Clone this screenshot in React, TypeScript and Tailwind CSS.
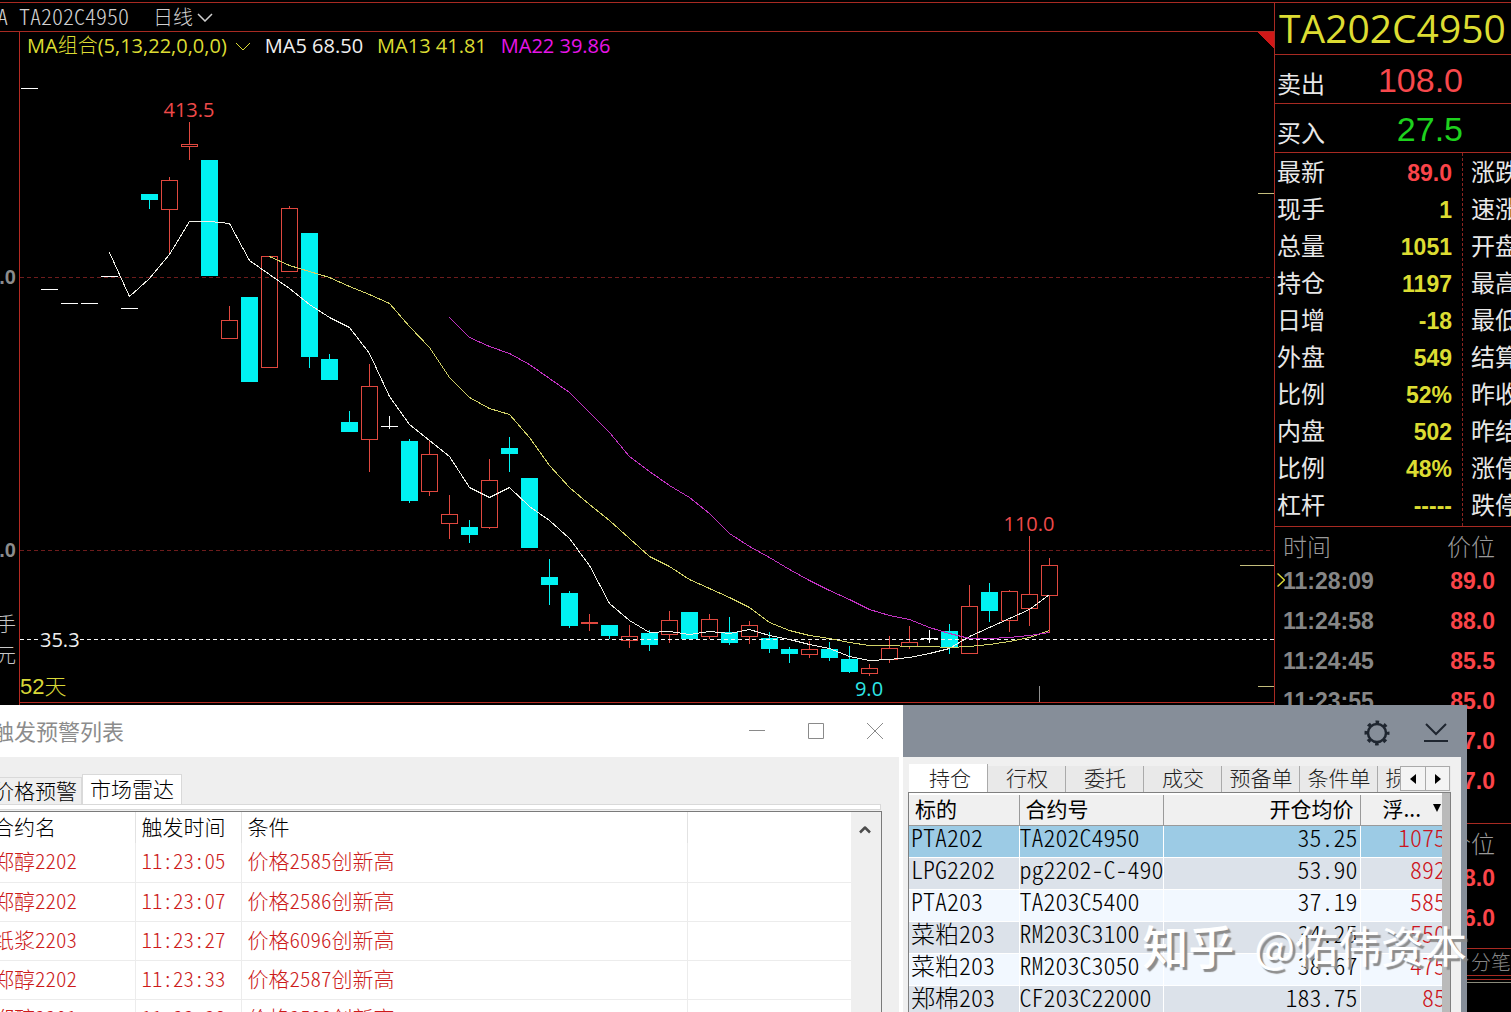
import { useState } from "react";
import { ChevronUp } from "lucide-react";

type Candle = {
  x: number;
  open: number;
  close: number;
  high: number;
  low: number;
  kind: "up" | "down" | "flat";
};

// [x, body top, body bottom, wick top, wick bottom, kind]
const RAW: [number, number, number, number, number, Candle["kind"]][] = [
  [149, 194, 200, 194, 209, "down"],
  [169, 180, 209, 177, 254, "up"],
  [189, 144, 146, 122, 160, "up"],
  [209, 160, 276, 160, 276, "down"],
  [229, 320, 338, 306, 338, "up"],
  [249, 297, 382, 297, 382, "down"],
  [269, 256, 367, 256, 367, "up"],
  [289, 208, 271, 206, 271, "up"],
  [309, 233, 357, 233, 368, "down"],
  [329, 359, 380, 354, 380, "down"],
  [349, 422, 432, 411, 432, "down"],
  [369, 386, 439, 364, 472, "up"],
  [389, 426, 426, 416, 429, "flat"],
  [409, 441, 501, 439, 503, "down"],
  [429, 454, 491, 440, 496, "up"],
  [449, 514, 523, 495, 539, "up"],
  [469, 527, 535, 520, 543, "down"],
  [489, 480, 527, 459, 529, "up"],
  [509, 448, 454, 437, 472, "down"],
  [529, 478, 548, 478, 548, "down"],
  [549, 577, 585, 559, 605, "down"],
  [569, 593, 626, 591, 628, "down"],
  [589, 622, 623, 614, 631, "up"],
  [609, 625, 636, 625, 639, "down"],
  [629, 636, 640, 625, 648, "up"],
  [649, 633, 645, 630, 651, "down"],
  [669, 620, 634, 611, 643, "up"],
  [689, 612, 639, 612, 640, "down"],
  [709, 619, 636, 614, 639, "up"],
  [729, 632, 643, 617, 645, "down"],
  [749, 625, 636, 621, 644, "up"],
  [769, 638, 649, 632, 653, "down"],
  [789, 649, 654, 647, 663, "down"],
  [809, 649, 654, 641, 658, "up"],
  [829, 649, 658, 642, 661, "down"],
  [849, 659, 672, 646, 673, "down"],
  [869, 668, 673, 664, 676, "up"],
  [889, 648, 659, 636, 663, "up"],
  [909, 642, 646, 626, 649, "up"],
  [929, 638, 638, 630, 643, "flat"],
  [949, 631, 648, 624, 654, "down"],
  [969, 606, 653, 585, 653, "up"],
  [989, 592, 611, 583, 622, "down"],
  [1009, 591, 620, 590, 632, "up"],
  [1029, 594, 608, 536, 626, "up"],
  [1049, 565, 595, 558, 633, "up"],
];

const CANDLES: Candle[] = RAW.map(([x, open, close, high, low, kind]) => ({ x, open, close, high, low, kind }));

const DASHES = [[21, 88], [41, 289], [61, 303], [81, 303], [101, 276], [121, 308]];

// One value per bar, 20 units apart
const MA5 = [252, 296, 278, 254, 221, 221, 223, 260, 274, 288, 304, 317, 327, 353, 396, 424, 440, 456, 487, 497, 487, 506, 520, 538, 565, 603, 620, 632, 631, 634, 631, 633, 629, 635, 639, 644, 648, 656, 660, 659, 657, 653, 648, 636, 627, 618, 609, 594];
const MA13 = [256, 265, 271, 277, 286, 294, 303, 326, 347, 377, 397, 408, 414, 437, 465, 487, 504, 520, 538, 556, 566, 579, 588, 597, 607, 622, 630, 635, 638, 642, 645, 645, 646, 646, 647, 646, 644, 641, 637, 630];
const MA22 = [317, 337, 346, 353, 364, 378, 392, 412, 432, 456, 471, 485, 497, 513, 533, 546, 557, 569, 580, 590, 599, 609, 615, 619, 627, 633, 638, 638, 637, 635, 632];

const toPoints = (start: number, ys: number[]) => ys.map((y, i) => `${start + i * 20 + 0.5},${y + 0.5}`).join(" ");

const QUOTES = [
  ["最新", "89.0", "涨跌"],
  ["现手", "1", "速涨"],
  ["总量", "1051", "开盘"],
  ["持仓", "1197", "最高"],
  ["日增", "-18", "最低"],
  ["外盘", "549", "结算"],
  ["比例", "52%", "昨收"],
  ["内盘", "502", "昨结"],
  ["比例", "48%", "涨停"],
  ["杠杆", "-----", "跌停"],
];

const TICKS = [
  ["11:28:09", "89.0"],
  ["11:24:58", "88.0"],
  ["11:24:45", "85.5"],
  ["11:23:55", "85.0"],
  ["11:23:41", "87.0"],
  ["11:23:20", "87.0"],
];

const TICKS_2 = [
  ["11:28:09", "88.0"],
  ["11:24:58", "86.0"],
];

const ALERTS = [
  ["郑醇2202", "11:23:05", "价格2585创新高"],
  ["郑醇2202", "11:23:07", "价格2586创新高"],
  ["纸浆2203", "11:23:27", "价格6096创新高"],
  ["郑醇2202", "11:23:33", "价格2587创新高"],
  ["郑醇2201", "11:23:38", "价格2588创新高"],
];

const POSITIONS = [
  ["PTA202", "TA202C4950", "35.25", "1075"],
  ["LPG2202", "pg2202-C-490", "53.90", "892"],
  ["PTA203", "TA203C5400", "37.19", "585"],
  ["菜粕203", "RM203C3100", "34.25", "550"],
  ["菜粕203", "RM203C3050", "38.67", "475"],
  ["郑棉203", "CF203C22000", "183.75", "85"],
];

const POS_TABS = ["持仓", "行权", "委托", "成交", "预备单", "条件单", "损盈单"];

function Chart() {
  return (
    <svg viewBox="0 32 1274 673" className="block w-full h-auto" shapeRendering="crispEdges">
      {/* frame and grid */}
      <path d="M19.5 32V705M19 702.5H1274" stroke="#b42a22" fill="none" />
      <path d="M1257 32H1274V48Z" fill="#d01818" />
      <path d="M20 277.5H1274M20 550.5H1274" stroke="#6e1c1c" strokeDasharray="4 3" />
      <path d="M1258 193.5H1274M1240 565.5H1274M1258 686.5H1274" stroke="#c4bd7c" />
      <path d="M1039.5 686V702" stroke="#909090" />

      {DASHES.map(([x, y]) => (
        <path key={x} d={`M${x} ${y + 0.5}h17`} stroke="#fff" />
      ))}

      {CANDLES.map((c) => {
        if (c.kind === "down") {
          return (
            <g key={c.x} fill="#00f2f2">
              <rect x={c.x} y={c.high} width="1" height={c.low - c.high} />
              <rect x={c.x - 8} y={c.open} width="17" height={c.close - c.open} />
            </g>
          );
        }
        if (c.kind === "flat") {
          return <path key={c.x} d={`M${c.x - 8} ${c.open + 0.5}h17M${c.x + 0.5} ${c.high}V${c.low}`} stroke="#fff" />;
        }
        return (
          <g key={c.x} stroke="#e0483f" fill="none">
            <path d={`M${c.x + 0.5} ${c.high}V${c.open}M${c.x + 0.5} ${c.close}V${c.low}`} />
            <rect x={c.x - 7.5} y={c.open + 0.5} width="16" height={c.close - c.open} />
          </g>
        );
      })}

      <path d="M20 639.5H38M80 639.5H1274" stroke="#f4f4f4" strokeDasharray="4 3" />
      <polyline points={toPoints(109, MA5)} fill="none" stroke="#f0f0e8" />
      <polyline points={toPoints(269, MA13)} fill="none" stroke="#d2d268" />
      <polyline points={toPoints(449, MA22)} fill="none" stroke="#c232c2" />

      <g className="font-['Open_Sans',sans-serif] text-[20px]">
        <text x="189" y="117" textAnchor="middle" fill="#ee4a4a">413.5</text>
        <text x="1029" y="531" textAnchor="middle" fill="#ee4a4a">110.0</text>
        <text x="869" y="696" textAnchor="middle" fill="#2ee6e6">9.0</text>
        <text x="40" y="647" fill="#f0f0f0">35.3</text>
      </g>
      <text x="20" y="694" fill="#d8d838" className="font-['Liberation_Sans','Noto_Sans_CJK_SC',sans-serif] text-[22px] font-light">52天</text>
      <g textAnchor="end" fill="#8c8c8c" className="font-['Liberation_Sans',sans-serif] text-[20px] font-bold">
        <text x="16" y="284">300.0</text>
        <text x="16" y="557">100.0</text>
      </g>
      <g textAnchor="end" fill="#c8c8c8" className="font-['Noto_Sans_CJK_SC',sans-serif] text-[20px] font-light">
        <text x="16" y="632">手</text>
        <text x="16" y="663">元</text>
      </g>
    </svg>
  );
}

function TickList({ rows, marker }: { rows: string[][]; marker?: boolean }) {
  return (
    <div className="font-['Liberation_Sans','Noto_Sans_CJK_SC',sans-serif]">
      <div className="flex h-[34px] justify-between pl-2 pr-4 text-2xl leading-[42px] text-[#9a9a9a] font-light">
        <span>时间</span>
        <span>价位</span>
      </div>
      {rows.map(([time, price], i) => (
        <div key={i} className="relative flex h-10 items-center justify-between pl-2 pr-4 text-[23px] font-bold">
          {marker && i === 0 && (
            <svg viewBox="0 0 8 14" className="absolute left-[2px] top-3 h-[14px] w-2">
              <path d="M0.5 0.5L7.5 7L0.5 13.5" fill="none" stroke="#d8d838" strokeWidth="1.5" />
            </svg>
          )}
          <span className="text-[#868686]">{time}</span>
          <span className="text-[#fb4449]">{price}</span>
        </div>
      ))}
    </div>
  );
}

function QuotePanel() {
  return (
    <aside className="w-[237px] shrink-0 overflow-hidden whitespace-nowrap border-l border-t border-[#a82a22] font-['Noto_Sans_CJK_SC',sans-serif] text-[#e8e8e8]">
      <h1 className="flex h-[52px] items-center border-b border-[#a82a22] pl-1 font-['Open_Sans',sans-serif] text-[39px] text-[#dcdc32]">
        TA202C4950
      </h1>
      <div className="flex h-[49px] items-center justify-between border-b border-[#a82a22] pl-[2px] pr-12">
        <span className="pt-2 text-2xl">卖出</span>
        <span className="pt-[2px] font-['Liberation_Sans',sans-serif] text-[34px] text-[#f8484c]">108.0</span>
      </div>
      <div className="flex h-[49px] items-center justify-between border-b border-[#a82a22] pl-[2px] pr-12">
        <span className="pt-2 text-2xl">买入</span>
        <span className="pt-[2px] font-['Liberation_Sans',sans-serif] text-[34px] text-[#1ed21e]">27.5</span>
      </div>
      <div className="flex border-b border-[#a82a22]">
        <dl className="w-[187px] shrink-0 pb-[3px]">
          {QUOTES.map(([label, value], i) => (
            <div key={i} className="flex h-[37px] items-center justify-between pl-[2px] pr-[10px]">
              <dt className="pb-[2px] text-2xl">{label}</dt>
              <dd className={`pt-[3px] font-['Liberation_Sans',sans-serif] text-[23px] font-bold ${i === 0 ? "text-[#fb4449]" : "text-[#dcdc32]"}`}>
                {value}
              </dd>
            </div>
          ))}
        </dl>
        <div className="border-l border-dashed border-[#8a2420] pl-2">
          {QUOTES.map((q, i) => (
            <div key={i} className="flex h-[37px] items-center pb-[2px] text-2xl">{q[2]}</div>
          ))}
        </div>
      </div>
      <div className="border-b border-[#a82a22] pb-[22px]">
        <TickList rows={TICKS} marker />
      </div>
      <div className="border-b border-[#a82a22] pb-[10px]">
        <TickList rows={TICKS_2} />
      </div>
      <div className="flex h-[27px] items-center justify-end border-b border-[#a82a22] text-xl font-light text-[#858585]">
        <span>分笔</span>
      </div>
      <div className="h-1 border-b border-[#a82a22]" />
      <div className="h-[3px] border-b border-[#8a8a7a]" />
    </aside>
  );
}

function AlertWindow() {
  const [tab, setTab] = useState(1);

  return (
    <section className="flex min-w-0 flex-1 flex-col overflow-hidden bg-white font-['Noto_Sans_CJK_SC',sans-serif] [font-feature-settings:'hwid']">
      <header className="flex h-[52px] shrink-0 items-center justify-between pr-[18px]">
        <h2 className="-ml-2 pb-[2px] text-[22px] text-[#8c8c8c]">触发预警列表</h2>
        <div className="flex items-center gap-[39px] text-[#8a8a8a]">
          <button aria-label="最小化">
            <svg viewBox="0 0 20 20" className="h-5 w-5" fill="none" stroke="currentColor"><path d="M2 9.5H18" /></svg>
          </button>
          <button aria-label="最大化">
            <svg viewBox="0 0 20 20" className="h-5 w-5" fill="none" stroke="currentColor"><path d="M2.5 2.5H17.5V17.5H2.5Z" /></svg>
          </button>
          <button aria-label="关闭">
            <svg viewBox="0 0 20 20" className="h-5 w-5" fill="none" stroke="currentColor"><path d="M2 2L18 18M18 2L2 18" /></svg>
          </button>
        </div>
      </header>
      <div className="mr-1 flex min-h-0 flex-1 flex-col bg-[#efefef] pr-[17px] pt-[17px]">
        <div className="flex shrink-0 items-end text-[21px] leading-[24px] font-light text-black">
          {["价格预警", "市场雷达"].map((t, i) => (
            <button
              key={t}
              onClick={() => setTab(i)}
              className={
                i === tab
                  ? "h-[30px] border border-b-0 border-[#d9d9d9] bg-white px-[7px] pb-1"
                  : "-ml-3 h-[27px] border border-b-0 border-[#d9d9d9] px-1 pb-1"
              }
            >
              {t}
            </button>
          ))}
        </div>
        <div className="mr-[1px] h-[6px] shrink-0 border border-l-0 border-[#d9d9d9] bg-white" />
        <div className="mt-[1px] flex min-h-0 flex-1 overflow-hidden border-r border-t border-[#7a7a7a] bg-white">
          <table className="w-full table-fixed self-start border-collapse text-left text-[21px] font-light">
            <colgroup>
              <col className="w-[135px]" />
              <col className="w-[106px]" />
              <col className="w-[446px]" />
              <col />
            </colgroup>
            <thead>
              <tr className="h-[31px] leading-[26px] text-black">
                <th className="border-r border-[#e2e2e2] p-0 pb-1 font-light"><span className="-ml-[7px]">合约名</span></th>
                <th className="border-r border-[#e2e2e2] p-0 pb-1 pl-[6px] font-light">触发时间</th>
                <th className="border-r border-[#e2e2e2] p-0 pb-1 pl-[6px] font-light">条件</th>
                <th className="p-0" />
              </tr>
            </thead>
            <tbody className="text-[#cc1a1a]">
              {ALERTS.map(([name, time, cond], i) => (
                <tr key={i} className="h-[39px] whitespace-nowrap border-b border-[#ececec] leading-[30px]">
                  <td className="border-r border-[#ececec] p-0 pb-1"><span className="-ml-[7px]">{name}</span></td>
                  <td className="border-r border-[#ececec] p-0 pb-1 pl-[6px]">{time}</td>
                  <td className="border-r border-[#ececec] p-0 pb-1 pl-[6px]">{cond}</td>
                  <td className="p-0" />
                </tr>
              ))}
            </tbody>
          </table>
          <div className="w-[30px] shrink-0 bg-[#efefef] pl-1 pt-2">
            <button aria-label="向上滚动"><ChevronUp className="h-5 w-5 text-[#4c4c4c]" strokeWidth={3} strokeLinecap="butt" /></button>
          </div>
        </div>
      </div>
    </section>
  );
}

function PositionsWindow() {
  const [tab, setTab] = useState(0);

  return (
    <section className="relative flex w-[564px] shrink-0 flex-col bg-[#868e99] pr-[6px] font-['Noto_Sans_CJK_SC',sans-serif] [font-feature-settings:'hwid']">
      <header className="flex h-[52px] shrink-0 items-center justify-end gap-8 pr-3 pt-1 text-[#1f2630]">
        <button aria-label="设置">
          <svg viewBox="0 0 28 28" className="h-7 w-7" fill="none" stroke="currentColor">
            <circle cx="14" cy="14" r="9" strokeWidth="2.5" />
            <circle cx="14" cy="14" r="11" strokeWidth="3" strokeDasharray="3.6 5.04" strokeDashoffset="1.8" />
          </svg>
        </button>
        <button aria-label="收起">
          <svg viewBox="0 0 26 22" className="h-[22px] w-[26px]" fill="none" stroke="currentColor" strokeWidth="2">
            <path d="M3 2L13 12L23 2M1 19H25" />
          </svg>
        </button>
      </header>
      <div className="flex min-h-0 flex-1 flex-col bg-[#f0f0f0] pl-[5px] pr-[10px] pt-[7px]">
        <div className="relative flex h-[28px] shrink-0 overflow-hidden pl-px text-[21px] leading-[22px] font-light text-[#222]">
          {POS_TABS.map((t, i) => (
            <button
              key={t}
              onClick={() => setTab(i)}
              className={
                i === tab
                  ? "w-[79px] shrink-0 border-r border-[#aaa] bg-white pb-[3px] pl-1"
                  : "mt-[2px] w-[78px] shrink-0 border-r border-[#aaa] bg-[#e9e9e9] pb-1 pl-px"
              }
            >
              {t}
            </button>
          ))}
          <div className="absolute right-px top-[2px] flex bg-[#f4f4f4]">
            <button aria-label="上一页" className="flex h-[25px] w-[26px] items-center justify-center border border-[#aaa]">
              <svg viewBox="0 0 6 10" className="h-[10px] w-[6px]"><path d="M6 0V10L0 5Z" /></svg>
            </button>
            <button aria-label="下一页" className="-ml-px flex h-[25px] w-[25px] items-center justify-center border border-[#aaa]">
              <svg viewBox="0 0 6 10" className="h-[10px] w-[6px]"><path d="M0 0V10L6 5Z" /></svg>
            </button>
          </div>
        </div>
        <div className="relative min-h-0 flex-1 overflow-hidden border border-b-0 border-[#808080] bg-white pt-[2px]">
          <table className="w-full table-fixed border-collapse whitespace-nowrap text-left text-[24px] font-light text-black">
            <colgroup>
              <col className="w-[110px]" />
              <col className="w-[144px]" />
              <col className="w-[197px]" />
              <col />
            </colgroup>
            <thead>
              <tr className="h-[30px] border-b border-[#9a9a9a] bg-[#f0f0f0] text-[21px] leading-[24px]">
                <th className="border-r border-[#9a9a9a] p-0 pb-1 pl-[6px] font-normal">标的</th>
                <th className="border-r border-[#9a9a9a] p-0 pb-1 pl-[6px] font-normal">合约号</th>
                <th className="border-r border-[#9a9a9a] p-0 pb-1 pr-[6px] text-right font-normal">开仓均价</th>
                <th className="p-0 pb-1 pr-[9px] font-normal">
                  <div className="flex items-center justify-end gap-3 [font-feature-settings:normal]">
                    浮...
                    <svg viewBox="0 0 8 8" className="h-2 w-2"><path d="M0 0H8L4 8Z" /></svg>
                  </div>
                </th>
              </tr>
            </thead>
            <tbody>
              {POSITIONS.map(([target, code, avg, pnl], i) => (
                <tr
                  key={code}
                  className={`h-8 border-b border-white leading-[20px] ${
                    i === 0 ? "bg-[#9ccbe5]" : i % 2 ? "bg-[#dce2ea]" : "bg-[#f2f8ff]"
                  }`}
                >
                  <td className="border-r border-white p-0 pb-2 pl-[2px]">{target}</td>
                  <td className="border-r border-white p-0 pb-2">{code}</td>
                  <td className="border-r border-white p-0 pb-2 pr-[2px] text-right">{avg}</td>
                  <td className="p-0 pb-2 pr-1 text-right text-[#cc1420]">{pnl}</td>
                </tr>
              ))}
            </tbody>
          </table>
          <div className="absolute inset-y-0 right-0 w-2 bg-[#bababa]" />
        </div>
      </div>
      <div className="pointer-events-none absolute right-0 top-[209px] flex items-center gap-5 whitespace-nowrap text-[43px] leading-[60px] text-white [font-feature-settings:normal] [text-shadow:3px_3px_1px_#8c8c8c]">
        <span className="text-[46px] font-medium">知乎</span>
        <span>@佑伟资本</span>
      </div>
    </section>
  );
}

export default function App() {
  return (
    <div className="relative h-screen overflow-hidden bg-black pt-[2px]">
      <div className="flex h-full">
        <main className="relative min-w-0 flex-1">
          <div className="flex h-[30px] items-center gap-6 border-y border-[#a82a22] font-['Noto_Sans_CJK_SC',sans-serif] text-[22px] font-light text-[#d0d0d0] [font-feature-settings:'hwid']">
            <span className="-ml-[3px] whitespace-pre pb-[3px]">A TA202C4950</span>
            <button className="flex items-center gap-1 text-xl">
              日线
              <svg viewBox="0 0 16 9" className="h-[9px] w-4" fill="none" stroke="currentColor" strokeWidth="1.5">
                <path d="M1 1L8 8L15 1" />
              </svg>
            </button>
          </div>
          <Chart />
          <div className="absolute left-[27px] top-[30px] flex h-[28px] items-center gap-[14px] whitespace-nowrap font-['Open_Sans','Noto_Sans_CJK_SC',sans-serif] text-xl">
            <button className="flex items-center gap-2 text-[#dcdc32]">
              <span>MA<span className="font-light">组合</span>(5,13,22,0,0,0)</span>
              <svg viewBox="0 0 16 9" className="h-[9px] w-4" fill="none" stroke="currentColor">
                <path d="M1 1L8 8L15 1" />
              </svg>
            </button>
            <span className="text-[#f0f0f0]">MA5 68.50</span>
            <span className="text-[#dcdc32]">MA13 41.81</span>
            <span className="text-[#e814e8]">MA22 39.86</span>
          </div>
        </main>
        <QuotePanel />
      </div>

      <div className="absolute bottom-0 left-0 right-11 flex h-[307px]">
        <AlertWindow />
        <PositionsWindow />
      </div>
    </div>
  );
}
